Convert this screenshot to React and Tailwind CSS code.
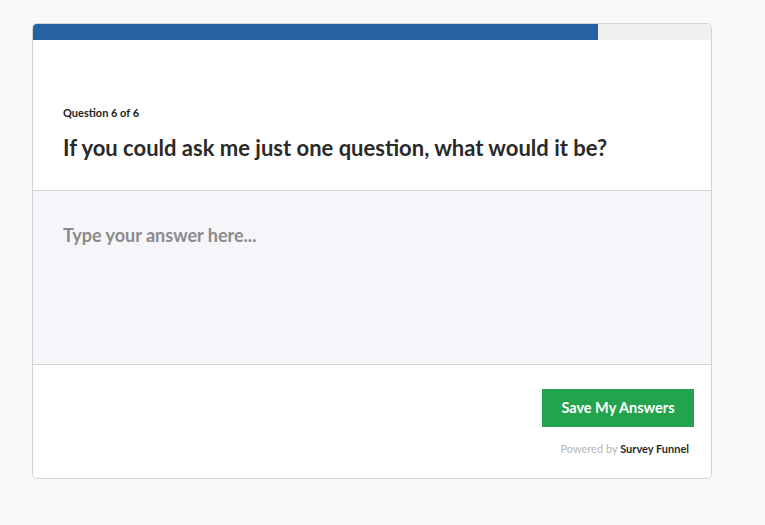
import React from "react";

export default function App() {
  return (
    <div className="min-h-[525px] w-full bg-[#f8f8f8] pt-[23px] pl-[32px]" style={{ fontFamily: "Lato, 'Noto Sans', sans-serif" }}>
      <div className="w-[680px] overflow-hidden rounded-[5px] border border-[#d4d4d4] bg-white">
        <div className="h-[16px] w-full bg-[#f0f0f0]">
          <div className="h-full w-[565px] bg-[#2561a3]" />
        </div>
        <div className="border-b border-[#d3d3d3] pl-[30px] pt-[66px] pb-[27px]">
          <div className="text-[11px] font-bold leading-[14px] text-[#222]">Question 6 of 6</div>
          <h1 className="mt-[13px] text-[22px] font-bold leading-[30px] text-[#2a2a2a]">
            If you could ask me just one question, what would it be?
          </h1>
        </div>
        <div className="h-[174px] border-b border-[#d3d3d3] bg-[#f5f5fa] pl-[30px] pt-[32px]">
          <textarea
            className="h-[120px] w-[600px] resize-none bg-transparent text-[18px] font-bold leading-[24px] text-[#333] outline-none placeholder:text-[#8a8a8a]"
            placeholder="Type your answer here..."
          />
        </div>
        <div className="flex flex-col items-end pr-[17px] pt-[24px] pb-[22px]">
          <button className="h-[38px] w-[152px] bg-[#22a34c] text-[14.5px] font-bold text-white">Save My Answers</button>
          <div className="mt-[15px] mr-[5px] text-[11px] leading-[14px] text-[#b5b5b5]">
            Powered by <span className="font-bold text-[#2a2a2a]">Survey Funnel</span>
          </div>
        </div>
      </div>
    </div>
  );
}
